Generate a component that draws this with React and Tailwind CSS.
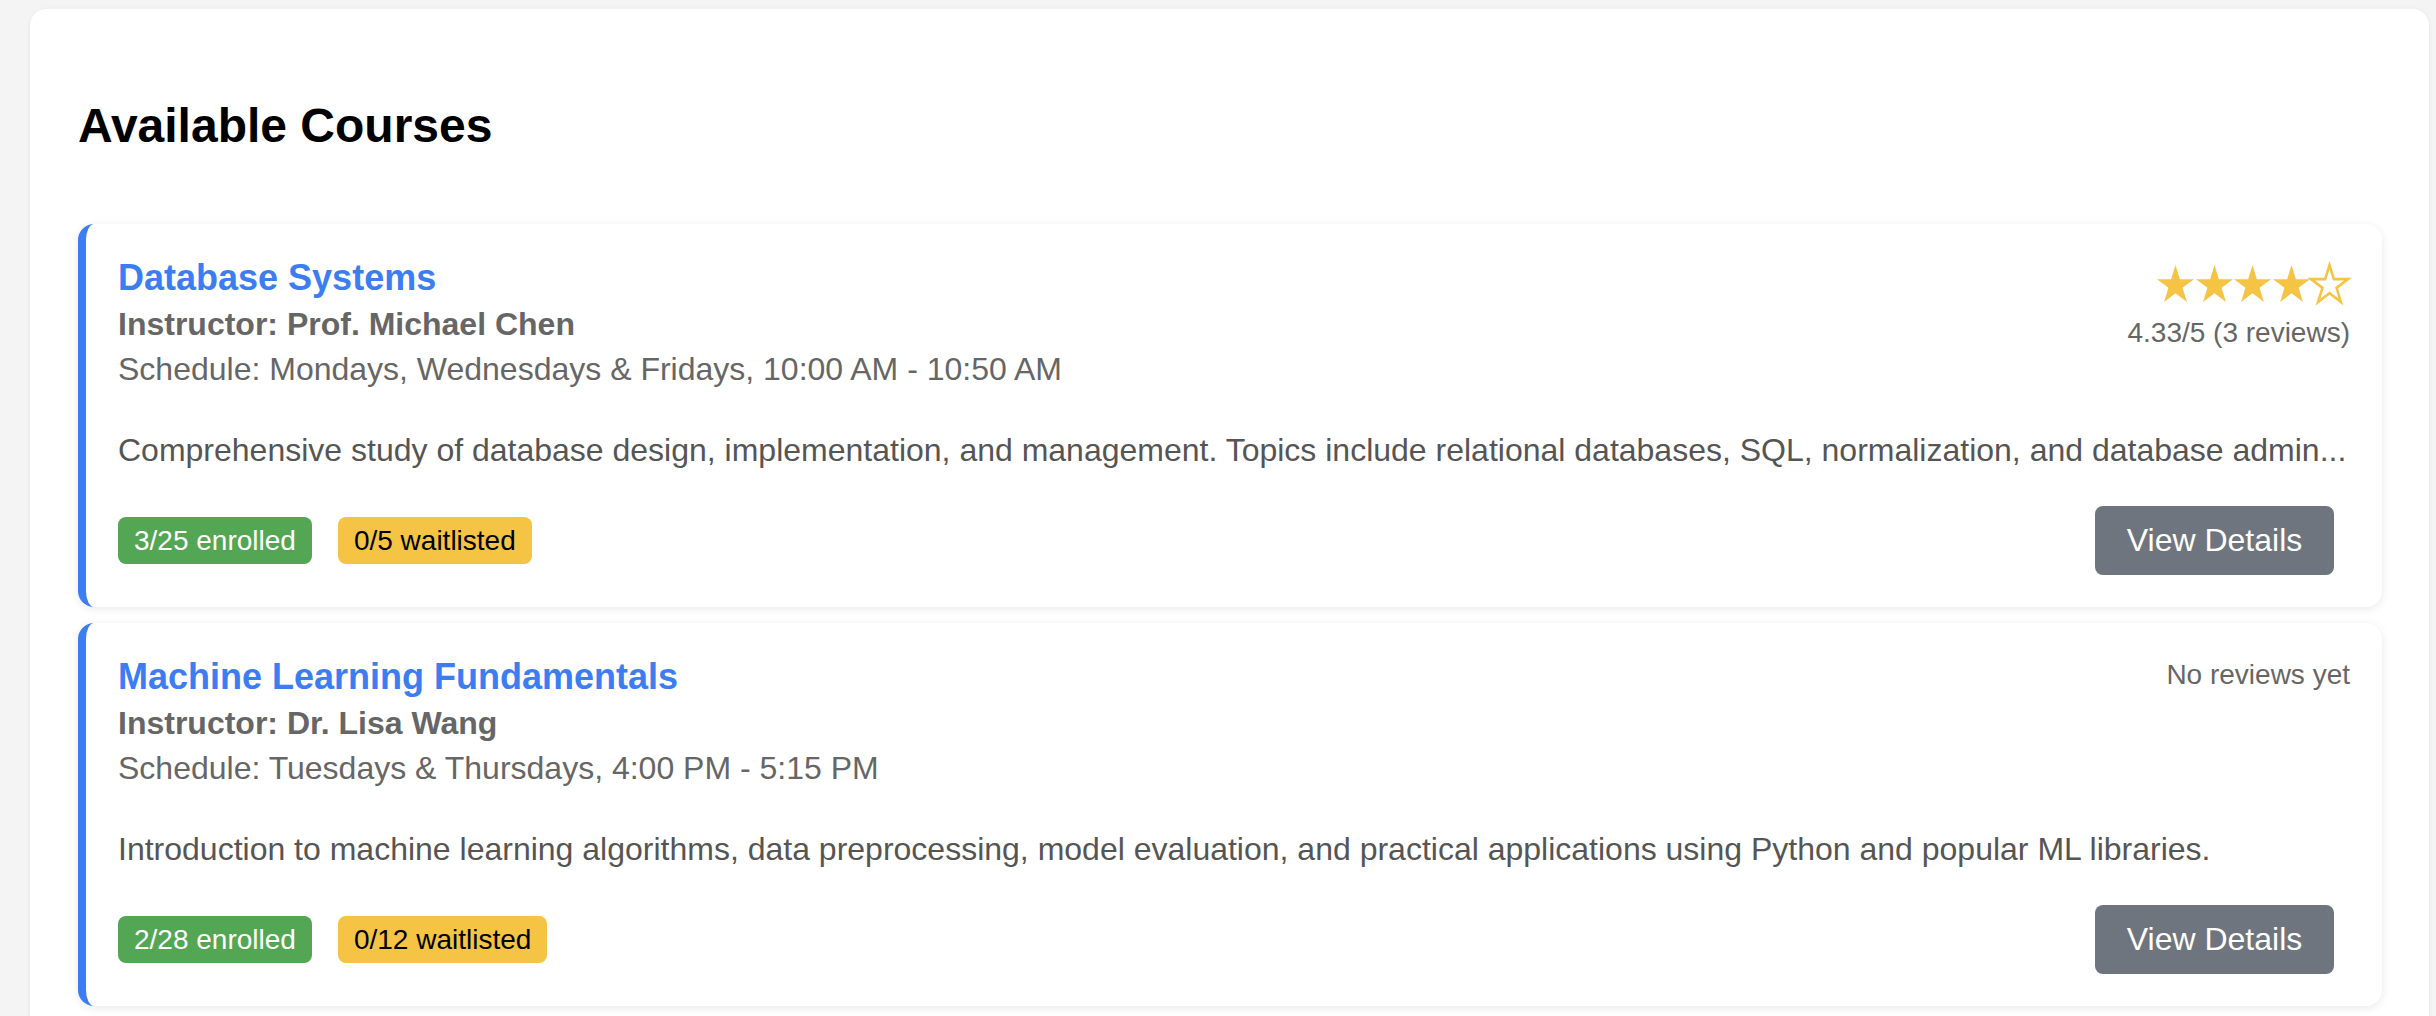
import React from "react";

const STAR_POINTS =
  "50,0 61.23,34.55 97.55,34.55 68.16,55.9 79.39,90.45 50,69.1 20.61,90.45 31.84,55.9 2.45,34.55 38.77,34.55";

function Star({ filled }) {
  return (
    <svg
      width="37"
      height="37"
      viewBox="2.45 0 95.1 90.45"
      preserveAspectRatio="none"
      overflow="visible"
      className="block"
    >
      {filled ? (
        <polygon points={STAR_POINTS} fill="#f5c444" />
      ) : (
        <polygon
          points={STAR_POINTS}
          fill="none"
          stroke="#f5c444"
          strokeWidth="6.5"
          strokeLinejoin="miter"
        />
      )}
    </svg>
  );
}

function Stars({ count }) {
  return (
    <div className="flex justify-end gap-[1.4px] mr-[2px]">
      {[0, 1, 2, 3, 4].map((i) => (
        <Star key={i} filled={i < count} />
      ))}
    </div>
  );
}

const courses = [
  {
    title: "Database Systems",
    instructor: "Prof. Michael Chen",
    schedule: "Mondays, Wednesdays & Fridays, 10:00 AM - 10:50 AM",
    description:
      "Comprehensive study of database design, implementation, and management. Topics include relational databases, SQL, normalization, and database admin...",
    enrolled: "3/25 enrolled",
    waitlisted: "0/5 waitlisted",
    rating: { stars: 4, text: "4.33/5 (3 reviews)" },
  },
  {
    title: "Machine Learning Fundamentals",
    instructor: "Dr. Lisa Wang",
    schedule: "Tuesdays & Thursdays, 4:00 PM - 5:15 PM",
    description:
      "Introduction to machine learning algorithms, data preprocessing, model evaluation, and practical applications using Python and popular ML libraries.",
    enrolled: "2/28 enrolled",
    waitlisted: "0/12 waitlisted",
    rating: null,
  },
];

function CourseCard({ c }) {
  return (
    <div className="bg-white rounded-[16px] border-l-[8px] border-[#3c7ef2] shadow-[0_2px_10px_rgba(0,0,0,0.09)] pl-[32px] pr-[32px] pt-[30px] pb-[32px]">
      <div className="flex justify-between items-start">
        <div>
          <h3 className="mt-[3px] text-[36px] leading-[41px] font-bold text-[#3c7ef2]">
            {c.title}
          </h3>
          <p className="mt-[8px] text-[32px] leading-[37px] font-bold text-[#666666]">
            Instructor: {c.instructor}
          </p>
          <p className="mt-[8px] text-[32px] leading-[37px] text-[#666666]">
            Schedule: {c.schedule}
          </p>
        </div>
        <div className="text-right">
          {c.rating ? (
            <div>
              <div className="mt-[11px]">
                <Stars count={c.rating.stars} />
              </div>
              <p className="mt-[15px] text-[28px] leading-[32px] text-[#666666]">
                {c.rating.text}
              </p>
            </div>
          ) : (
            <p className="mt-[6px] text-[28px] leading-[32px] text-[#666666]">
              No reviews yet
            </p>
          )}
        </div>
      </div>
      <p className="mt-[44px] text-[32px] leading-[37px] text-[#555555] whitespace-nowrap">
        {c.description}
      </p>
      <div className="mt-[37px] flex items-center justify-between">
        <div className="flex items-center gap-[26px]">
          <span className="h-[47px] px-[16px] flex items-center rounded-[8px] bg-[#53a653] text-white text-[28px] leading-[32px]">
            {c.enrolled}
          </span>
          <span className="h-[47px] px-[16px] flex items-center rounded-[8px] bg-[#f5c444] text-black text-[28px] leading-[32px]">
            {c.waitlisted}
          </span>
        </div>
        <button className="mr-[16px] h-[69px] w-[239px] flex items-center justify-center rounded-[8px] bg-[#6e757e] text-white text-[32px] leading-[37px]">
          View Details
        </button>
      </div>
    </div>
  );
}

export default function App() {
  return (
    <div
      className="min-h-screen bg-[#f4f4f4] pt-[9px] pl-[30px] overflow-hidden"
      style={{ fontFamily: '"Liberation Sans", Arial, Helvetica, sans-serif' }}
    >
      <div className="w-[2399px] bg-white rounded-[16px] shadow-[0_1px_4px_rgba(0,0,0,0.08)] pl-[48px] pr-[47px] pb-[48px]">
        <h2 className="pt-[89px] text-[48px] leading-[55px] font-bold text-black">
          Available Courses
        </h2>
        <div className="mt-[71px] flex flex-col gap-[16px]">
          {courses.map((c) => (
            <CourseCard key={c.title} c={c} />
          ))}
        </div>
      </div>
    </div>
  );
}
